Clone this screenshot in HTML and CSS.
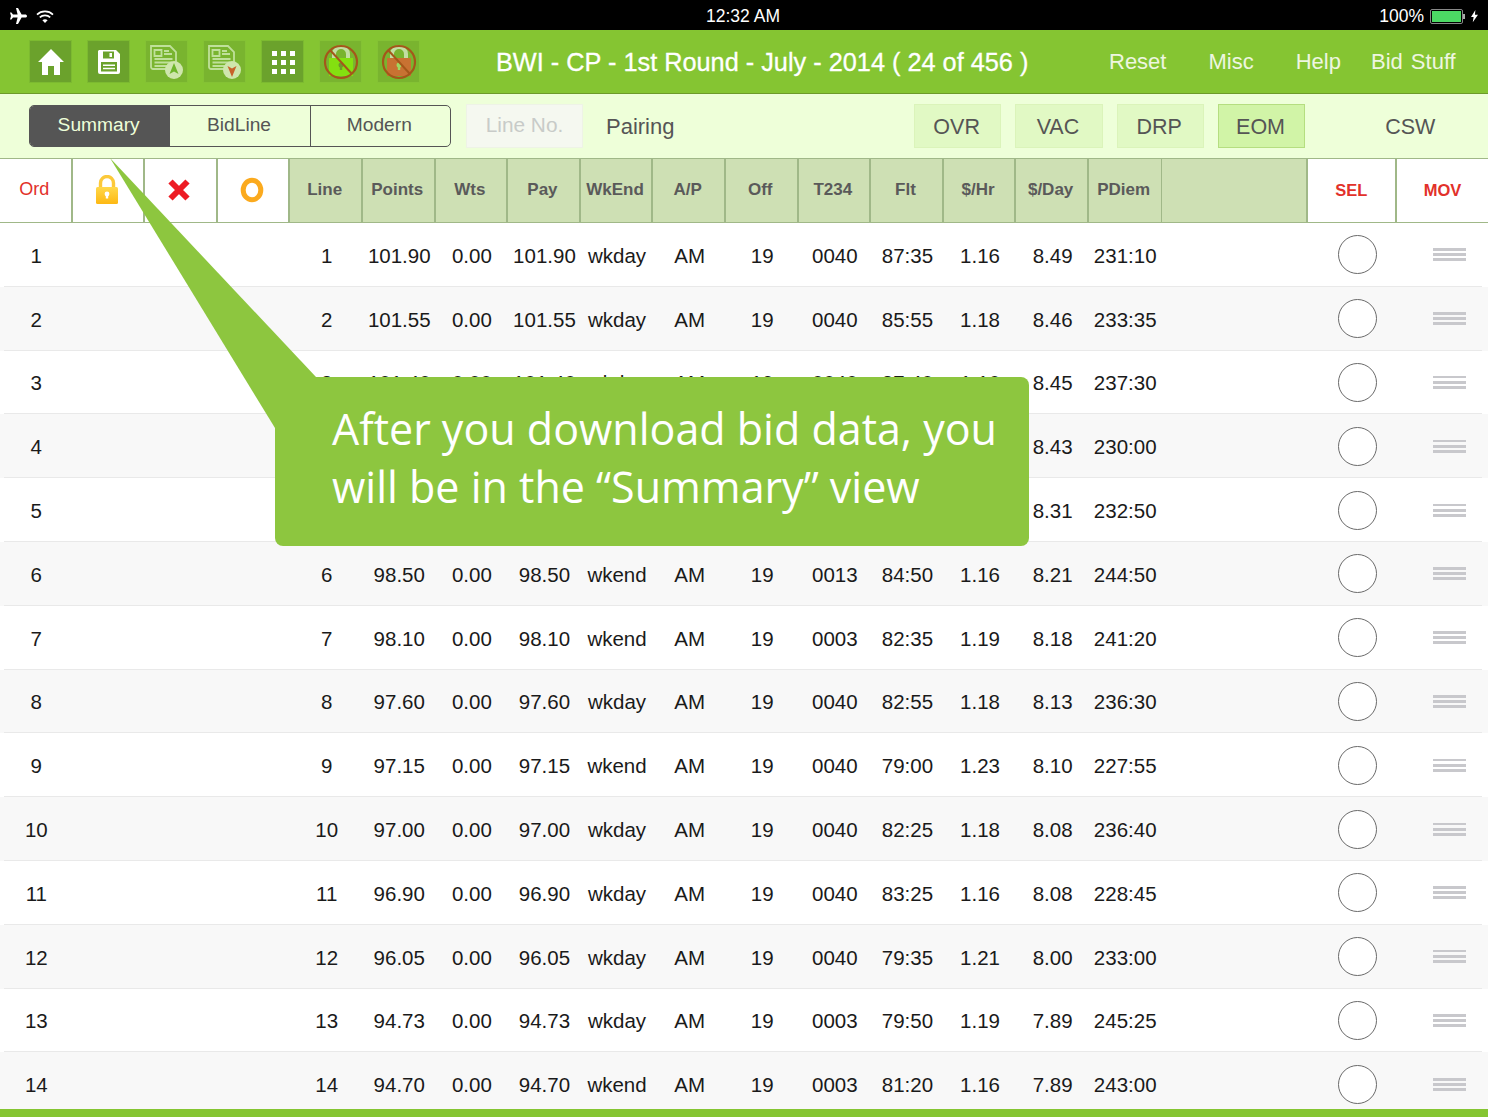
FILE: index.html
```html
<!DOCTYPE html>
<html lang="en">
<head>
  <meta charset="UTF-8">
  <title>Bid Lines</title>
  <link rel="stylesheet" href="styles.css">
</head>
<body>
  <div class="statusbar">
    <div class="status-left">
      <svg width="19" height="16" viewBox="0 0 19 16"><path d="M8 0h2l3.600 6.400H17c1.200 0 2 .7 2 1.600s-.8 1.600-2 1.600h-3.400L10 16H8l1.600-6.400H5L3.400 11.600H2L3 8 2 4.400h1.400L5 6.400h4.600z" fill="#fff"/></svg>
      <svg width="18" height="13" viewBox="0 0 18 13" fill="none" stroke="#fff" stroke-width="1.700"><path d="M1 4.600c4.400-4.200 11.600-4.200 16 0"/><path d="M3.800 7.400c2.800-2.600 7.600-2.600 10.400 0"/><path d="M9 13 6.400 10.200c1.500-1.300 3.700-1.300 5.200 0z" fill="#fff" stroke="none"/></svg>
    </div>
    <div class="status-time">12:32 AM</div>
    <div class="status-right">
      <span>100%</span>
      <div class="battery"><div class="battery-fill"></div></div>
      <svg width="7" height="14" viewBox="0 0 8 14"><path d="M5 0 0 8h3l-1 6 6-8.500H4.500z" fill="#fff"/></svg>
    </div>
  </div>

  <div class="toolbar">
    <div class="tool-btn">
      <svg width="28" height="28" viewBox="0 0 28 28"><path d="M14 1 1 14h4v13h6v-9h6v9h6V14h4z" fill="#fff"/></svg>
    </div>
    <div class="tool-btn">
      <svg width="24" height="26" viewBox="0 0 24 26"><path d="M2 1h17l4 4v18a2 2 0 0 1-2 2H3a2 2 0 0 1-2-2V2z" fill="#fff"/><path d="M6 2.500h11v7H6z" fill="#6ba22c"/><path d="M12.500 4h2.500v4h-2.500z" fill="#fff"/><path d="M4 13h16v9.500H4z" fill="#6ba22c"/><path d="M6 15.500h12v1.500H6zM6 18.800h12v1.500H6z" fill="#fff"/></svg>
    </div>
    <div class="tool-btn tool-dim">
      <svg width="36" height="36" viewBox="0 0 36 36"><g fill="none" stroke="#bfe09a" stroke-width="1.800"><path d="M2 2h19l6 6v17H4a2 2 0 0 1-2-2z"/><path d="M5.500 6h7v6h-7z"/><path d="M15 7h5M15 10h8M5.500 15h18M5.500 18.500h18M5.500 22h14"/></g><circle cx="25" cy="26" r="9" fill="#cfe6ad"/><path d="M25 19l4.500 11-4.500-2.500-4.500 2.500z" fill="#6fb52c"/></svg>
    </div>
    <div class="tool-btn tool-dim">
      <svg width="36" height="36" viewBox="0 0 36 36"><g fill="none" stroke="#bfe09a" stroke-width="1.800"><path d="M2 2h19l6 6v17H4a2 2 0 0 1-2-2z"/><path d="M5.500 6h7v6h-7z"/><path d="M15 7h5M15 10h8M5.500 15h18M5.500 18.500h18M5.500 22h14"/></g><circle cx="25" cy="26" r="9" fill="#cfe6ad"/><path d="M25 33l-4.500-11 4.500 2.500 4.500-2.500z" fill="#c8622a"/></svg>
    </div>
    <div class="tool-btn">
      <svg width="24" height="24" viewBox="0 0 24 24" fill="#fff"><path d="M1 1h5v5H1zM10 1h5v5h-5zM19 1h5v5h-5zM1 10h5v5H1zM10 10h5v5h-5zM19 10h5v5h-5zM1 19h5v5H1zM10 19h5v5h-5zM19 19h5v5h-5z"/></svg>
    </div>
    <div class="tool-btn tool-dim">
      <svg width="36" height="36" viewBox="0 0 36 36"><path d="M11 15V10a7 7 0 0 1 14 0v5" fill="none" stroke="#c3dea3" stroke-width="4"/><path d="M6 14h24v18H6z" fill="#84e010"/><circle cx="18" cy="21" r="2.500" fill="#6c9a2a"/><path d="M16.800 22h2.400v4h-2.400z" fill="#6c9a2a"/><circle cx="18" cy="18" r="16" fill="none" stroke="#a4571a" stroke-width="2.200"/><path d="M7 6l22 24" stroke="#a4571a" stroke-width="2"/></svg>
    </div>
    <div class="tool-btn tool-dim">
      <svg width="36" height="36" viewBox="0 0 36 36"><path d="M11 15V10a7 7 0 0 1 14 0v5" fill="none" stroke="#c3dea3" stroke-width="4"/><path d="M6 14h24v18H6z" fill="#c87232"/><circle cx="18" cy="21" r="2.500" fill="#9ed860"/><path d="M16.800 22h2.400v4h-2.400z" fill="#9ed860"/><circle cx="18" cy="18" r="16" fill="none" stroke="#a4571a" stroke-width="2.200"/><path d="M7 6l22 24" stroke="#a4571a" stroke-width="2"/></svg>
    </div>
    <div class="title">BWI - CP - 1st Round - July - 2014 ( 24 of 456 )</div>
    <div class="nav">
      <span class="nav-reset">Reset</span>
      <span class="nav-misc">Misc</span>
      <span class="nav-help">Help</span>
      <span>Bid Stuff</span>
    </div>
  </div>

  <div class="subbar">
    <div class="segments">
      <div class="segment segment-on">Summary</div>
      <div class="segment">BidLine</div>
      <div class="segment">Modern</div>
    </div>
    <div class="line-input">Line No.</div>
    <div class="pairing">Pairing</div>
    <div class="filters">
      <div class="filter">OVR</div>
      <div class="filter">VAC</div>
      <div class="filter">DRP</div>
      <div class="filter filter-on">EOM</div>
    </div>
    <div class="csw">CSW</div>
  </div>

  <div class="head cols">
    <div class="hcell hcell-white hcell-red">Ord</div>
    <div class="hcell hcell-white">
      <svg width="24" height="30" viewBox="0 0 24 30"><defs><linearGradient id="lockfill" x1="0" y1="0" x2="0" y2="1"><stop offset="0" stop-color="#ffd84a"/><stop offset="1" stop-color="#fdb813"/></linearGradient></defs><path d="M5.500 13V8a6.500 6.500 0 0 1 13 0v5" fill="none" stroke="#fcc93a" stroke-width="3.400"/><rect x="1" y="12" width="22" height="17" rx="1.500" fill="url(#lockfill)"/><circle cx="12" cy="19" r="2.400" fill="#fff"/><path d="M10.800 19h2.400v4.500h-2.400z" fill="#fff"/></svg>
    </div>
    <div class="hcell hcell-white">
      <svg width="24" height="24" viewBox="0 0 24 24"><path d="M3.500 3.500l17 17M20.500 3.500l-17 17" stroke="#ed1c24" stroke-width="6"/></svg>
    </div>
    <div class="hcell hcell-white">
      <svg width="24" height="26" viewBox="0 0 24 26"><ellipse cx="12" cy="13" rx="8.800" ry="9.800" fill="none" stroke="#fbaa1e" stroke-width="5"/></svg>
    </div>
    <div class="hcell">Line</div>
    <div class="hcell">Points</div>
    <div class="hcell">Wts</div>
    <div class="hcell">Pay</div>
    <div class="hcell">WkEnd</div>
    <div class="hcell">A/P</div>
    <div class="hcell">Off</div>
    <div class="hcell">T234</div>
    <div class="hcell">Flt</div>
    <div class="hcell">$/Hr</div>
    <div class="hcell">$/Day</div>
    <div class="hcell hcell-thin">PDiem</div>
    <div class="hcell"></div>
    <div class="hcell hcell-white hcell-act">SEL</div>
    <div class="hcell hcell-white hcell-act hcell-last">MOV</div>
  </div>

  <div class="rows">
    <div class="row cols"><span class="ord">1</span><span class="line">1</span><span>101.90</span><span>0.00</span><span>101.90</span><span>wkday</span><span>AM</span><span>19</span><span>0040</span><span>87:35</span><span>1.16</span><span>8.49</span><span>231:10</span><i class="sel"></i><i class="mov"></i></div>
    <div class="row cols"><span class="ord">2</span><span class="line">2</span><span>101.55</span><span>0.00</span><span>101.55</span><span>wkday</span><span>AM</span><span>19</span><span>0040</span><span>85:55</span><span>1.18</span><span>8.46</span><span>233:35</span><i class="sel"></i><i class="mov"></i></div>
    <div class="row cols"><span class="ord">3</span><span class="line">3</span><span>101.40</span><span>0.00</span><span>101.40</span><span>wkday</span><span>AM</span><span>19</span><span>0040</span><span>87:40</span><span>1.16</span><span>8.45</span><span>237:30</span><i class="sel"></i><i class="mov"></i></div>
    <div class="row cols"><span class="ord">4</span><span class="day">8.43</span><span>230:00</span><i class="sel"></i><i class="mov"></i></div>
    <div class="row cols"><span class="ord">5</span><span class="day">8.31</span><span>232:50</span><i class="sel"></i><i class="mov"></i></div>
    <div class="row cols"><span class="ord">6</span><span class="line">6</span><span>98.50</span><span>0.00</span><span>98.50</span><span>wkend</span><span>AM</span><span>19</span><span>0013</span><span>84:50</span><span>1.16</span><span>8.21</span><span>244:50</span><i class="sel"></i><i class="mov"></i></div>
    <div class="row cols"><span class="ord">7</span><span class="line">7</span><span>98.10</span><span>0.00</span><span>98.10</span><span>wkend</span><span>AM</span><span>19</span><span>0003</span><span>82:35</span><span>1.19</span><span>8.18</span><span>241:20</span><i class="sel"></i><i class="mov"></i></div>
    <div class="row cols"><span class="ord">8</span><span class="line">8</span><span>97.60</span><span>0.00</span><span>97.60</span><span>wkday</span><span>AM</span><span>19</span><span>0040</span><span>82:55</span><span>1.18</span><span>8.13</span><span>236:30</span><i class="sel"></i><i class="mov"></i></div>
    <div class="row cols"><span class="ord">9</span><span class="line">9</span><span>97.15</span><span>0.00</span><span>97.15</span><span>wkend</span><span>AM</span><span>19</span><span>0040</span><span>79:00</span><span>1.23</span><span>8.10</span><span>227:55</span><i class="sel"></i><i class="mov"></i></div>
    <div class="row cols"><span class="ord">10</span><span class="line">10</span><span>97.00</span><span>0.00</span><span>97.00</span><span>wkday</span><span>AM</span><span>19</span><span>0040</span><span>82:25</span><span>1.18</span><span>8.08</span><span>236:40</span><i class="sel"></i><i class="mov"></i></div>
    <div class="row cols"><span class="ord">11</span><span class="line">11</span><span>96.90</span><span>0.00</span><span>96.90</span><span>wkday</span><span>AM</span><span>19</span><span>0040</span><span>83:25</span><span>1.16</span><span>8.08</span><span>228:45</span><i class="sel"></i><i class="mov"></i></div>
    <div class="row cols"><span class="ord">12</span><span class="line">12</span><span>96.05</span><span>0.00</span><span>96.05</span><span>wkday</span><span>AM</span><span>19</span><span>0040</span><span>79:35</span><span>1.21</span><span>8.00</span><span>233:00</span><i class="sel"></i><i class="mov"></i></div>
    <div class="row cols"><span class="ord">13</span><span class="line">13</span><span>94.73</span><span>0.00</span><span>94.73</span><span>wkday</span><span>AM</span><span>19</span><span>0003</span><span>79:50</span><span>1.19</span><span>7.89</span><span>245:25</span><i class="sel"></i><i class="mov"></i></div>
    <div class="row cols"><span class="ord">14</span><span class="line">14</span><span>94.70</span><span>0.00</span><span>94.70</span><span>wkend</span><span>AM</span><span>19</span><span>0003</span><span>81:20</span><span>1.16</span><span>7.89</span><span>243:00</span><i class="sel"></i><i class="mov"></i></div>
  </div>

  <div class="bottombar"></div>

  <!-- callout over the table -->
  <svg class="callout-tail" width="210" height="272" viewBox="0 0 210 272"><path d="M0 0 206 219 206 240 165 270z" fill="#8dc63f"/></svg>
  <div class="callout">After you download bid data, you will be in the “Summary” view</div>
</body>
</html>
```

FILE: styles.css
```css
* {
  box-sizing: border-box;
}

body {
  margin: 0;
  height: 1117px;
  overflow: hidden;
  position: relative;
  display: flex;
  flex-direction: column;
  font-family: "Liberation Sans", Arial, sans-serif;
  background: #fff;
  color: #555;
}

/* status bar */
.statusbar {
  height: 30px;
  flex: none;
  background: #000;
  color: #fff;
  display: flex;
  align-items: center;
  padding: 2px 10px 0 8px;
  font-size: 17.500px;
}

.status-left {
  flex: 1;
  display: flex;
  align-items: center;
  gap: 9px;
}

.status-time {
  flex: none;
}

.status-right {
  flex: 1;
  display: flex;
  justify-content: flex-end;
  align-items: center;
  gap: 6px;
}

.battery {
  width: 33px;
  height: 15px;
  margin-right: 2px;
  border: 1px solid #888;
  border-radius: 2px;
  padding: 1px;
  position: relative;
}

.battery::after {
  content: "";
  position: absolute;
  left: 32px;
  top: 4px;
  width: 2px;
  height: 5px;
  background: #aaa;
}

.battery-fill {
  height: 100%;
  background: #4cd964;
}

/* toolbar */
.toolbar {
  height: 64px;
  flex: none;
  background: #85c532;
  border-bottom: 1px solid #6c9a2a;
  display: flex;
  align-items: center;
  padding-left: 29px;
  gap: 15px;
  color: #fff;
}

.tool-btn {
  width: 43px;
  height: 43px;
  background: #6ba22c;
  border: 1px solid #7cba30;
  display: flex;
  align-items: center;
  justify-content: center;
}

.tool-dim {
  background: #79b42f;
  border-color: #84c234;
}

.title {
  margin-left: 61px;
  width: 592px;
  padding-top: 2px;
  font-size: 25.300px;
  white-space: nowrap;
  -webkit-text-stroke: 0.3px #fff;
}

.nav {
  display: flex;
  font-size: 22px;
  word-spacing: 2px;
  color: #eef6e0;
  margin-left: 6px;
}

.nav-reset {
  margin-right: 42px;
}

.nav-misc {
  margin-right: 42px;
}

.nav-help {
  margin-right: 30px;
}

/* sub bar */
.subbar {
  height: 64px;
  flex: none;
  background: #eeffd9;
  display: flex;
  align-items: center;
  padding-left: 29px;
  font-size: 21.500px;
}

.segments {
  display: flex;
  width: 422px;
  height: 42px;
  border: 1.5px solid #555;
  border-radius: 5px;
  overflow: hidden;
  font-size: 19.200px;
}

.segment {
  flex: 1;
  display: flex;
  align-items: center;
  justify-content: center;
  padding: 0 2px 3px 0;
  border-left: 1.5px solid #555;
}

.segment-on {
  background: #555;
  color: #eeffd9;
  border-left: 0;
}

.line-input {
  margin-left: 15px;
  width: 117px;
  height: 44px;
  padding-bottom: 2px;
  background: #f5f8f0;
  border: 1px solid #eef3e6;
  color: #c8cbc8;
  font-size: 20.800px;
  display: flex;
  align-items: center;
  justify-content: center;
}

.pairing {
  margin-left: 23px;
  width: 308px;
  padding-top: 2px;
  font-size: 22px;
}

.filters {
  display: flex;
  gap: 14px;
}

.filter {
  width: 87.300px;
  height: 44px;
  padding: 2px 2px 0 0;
  background: #e1f9c4;
  border: 1px solid #dbf4ba;
  display: flex;
  align-items: center;
  justify-content: center;
}

.filter-on {
  background: #d1f4a7;
  border-color: #b5de80;
}

.csw {
  margin-left: 80px;
  padding-top: 2px;
}

/* table */
.cols {
  display: grid;
  grid-template-columns: repeat(16, 72.6px) 146.4px 89px 1fr;
}

.head {
  height: 65px;
  flex: none;
  background: #a0b888;
  border-top: 1px solid #a0b888;
  border-bottom: 1px solid #a0b888;
}

.hcell {
  background: #cee0b4;
  margin-right: 2px;
  padding: 0 2px 2px 0;
  display: flex;
  align-items: center;
  justify-content: center;
  font-size: 17px;
  font-weight: bold;
  color: #5a5a5a;
}

.hcell-thin {
  margin-right: 1px;
}

.hcell-white {
  background: #fff;
}

.hcell-red {
  color: #e2312a;
  font-weight: normal;
  font-size: 18px;
}

.hcell-act {
  padding: 0;
  color: #e2312a;
  font-size: 16.500px;
}

.hcell-last {
  margin-right: 0;
}

.rows {
  flex: 1;
  min-height: 0;
  overflow: hidden;
}

.row {
  height: 63.8px;
  align-items: center;
  font-size: 20.500px;
  color: #1a1a1a;
  text-align: center;
  background: linear-gradient(#e9e9e9, #e9e9e9) 4px 100% / 1478px 1px no-repeat;
}

.row:nth-child(even) {
  background-color: #f8f8f8;
}

.row span {
  padding-top: 2px;
}

.ord {
  grid-column: 1;
}

.line {
  grid-column: 5;
}

.day {
  grid-column: 15;
}

.sel {
  grid-column: 18;
  justify-self: end;
  margin-right: 20px;
  width: 39px;
  height: 39px;
  border: 1.5px solid #6a6a6a;
  border-radius: 50%;
  background: #fff;
}

.mov {
  grid-column: 19;
  justify-self: end;
  margin-right: 22px;
  width: 33px;
  height: 13px;
  background: repeating-linear-gradient(#c8c8cc 0, #c8c8cc 2.500px, transparent 2.500px, transparent 5.200px);
}

.bottombar {
  height: 8px;
  flex: none;
  background: #85c532;
}

/* callout */
.callout {
  position: absolute;
  left: 275px;
  top: 377px;
  width: 754px;
  height: 169px;
  padding: 23px 20px 0 57px;
  background: #8dc63f;
  border-radius: 0 8px 8px 8px;
  color: #fff;
  font-family: "Open Sans", sans-serif;
  font-size: 43px;
  line-height: 58px;
}

.callout-tail {
  position: absolute;
  left: 110px;
  top: 158px;
}
```
